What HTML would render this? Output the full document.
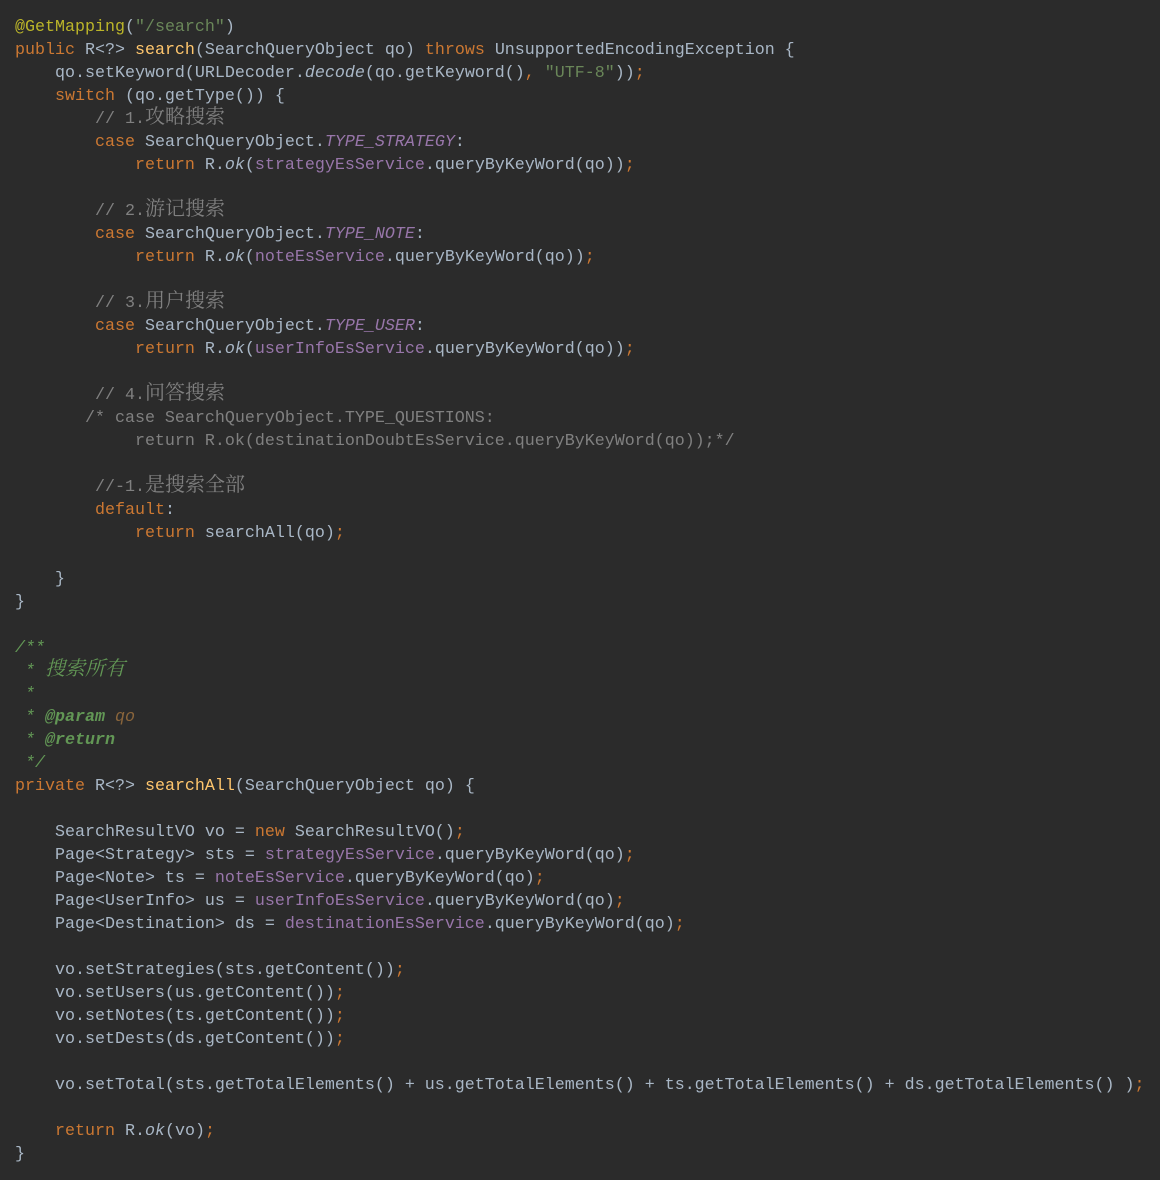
<!DOCTYPE html>
<html><head><meta charset="utf-8"><style>
html,body{margin:0;padding:0;background:#2b2b2b;width:1160px;height:1180px;overflow:hidden}
pre{margin:0;padding:16px 0 0 15px;font-family:"Liberation Mono",monospace;font-size:16.667px;line-height:23px;color:#a9b7c6;white-space:pre}
.k{color:#cc7832}.s{color:#6a8759}.f{color:#9876aa;font-style:italic}.fn{color:#9876aa}.c{color:#808080}.d{color:#629755;font-style:italic}.t{color:#629755;font-weight:bold;font-style:italic}.dq{color:#8a653b;font-style:italic}.a{color:#bbb529}.m{color:#ffc66d}.i{font-style:italic}
.z{font-family:"Noto Serif CJK SC",serif;font-size:20px;line-height:0}
</style></head><body><pre><span class="a">@GetMapping</span>(<span class="s">"/search"</span>)
<span class="k">public </span>R&lt;?&gt; <span class="m">search</span>(SearchQueryObject qo) <span class="k">throws </span>UnsupportedEncodingException {
    qo.setKeyword(URLDecoder.<span class="i">decode</span>(qo.getKeyword()<span class="k">, </span><span class="s">"UTF-8"</span>))<span class="k">;</span>
    <span class="k">switch </span>(qo.getType()) {
        <span class="c">// 1.<span class="z">攻略搜索</span></span>
        <span class="k">case </span>SearchQueryObject.<span class="f">TYPE_STRATEGY</span>:
            <span class="k">return </span>R.<span class="i">ok</span>(<span class="fn">strategyEsService</span>.queryByKeyWord(qo))<span class="k">;</span>

        <span class="c">// 2.<span class="z">游记搜索</span></span>
        <span class="k">case </span>SearchQueryObject.<span class="f">TYPE_NOTE</span>:
            <span class="k">return </span>R.<span class="i">ok</span>(<span class="fn">noteEsService</span>.queryByKeyWord(qo))<span class="k">;</span>

        <span class="c">// 3.<span class="z">用户搜索</span></span>
        <span class="k">case </span>SearchQueryObject.<span class="f">TYPE_USER</span>:
            <span class="k">return </span>R.<span class="i">ok</span>(<span class="fn">userInfoEsService</span>.queryByKeyWord(qo))<span class="k">;</span>

        <span class="c">// 4.<span class="z">问答搜索</span></span>
       <span class="c">/* case SearchQueryObject.TYPE_QUESTIONS:
            return R.ok(destinationDoubtEsService.queryByKeyWord(qo));*/</span>

        <span class="c">//-1.<span class="z">是搜索全部</span></span>
        <span class="k">default</span>:
            <span class="k">return </span>searchAll(qo)<span class="k">;</span>

    }
}

<span class="d">/**
 * <span class="z">搜索所有</span>
 *
 * </span><span class="t">@param </span><span class="dq">qo</span>
<span class="d"> * </span><span class="t">@return</span>
<span class="d"> */</span>
<span class="k">private </span>R&lt;?&gt; <span class="m">searchAll</span>(SearchQueryObject qo) {

    SearchResultVO vo = <span class="k">new </span>SearchResultVO()<span class="k">;</span>
    Page&lt;Strategy&gt; sts = <span class="fn">strategyEsService</span>.queryByKeyWord(qo)<span class="k">;</span>
    Page&lt;Note&gt; ts = <span class="fn">noteEsService</span>.queryByKeyWord(qo)<span class="k">;</span>
    Page&lt;UserInfo&gt; us = <span class="fn">userInfoEsService</span>.queryByKeyWord(qo)<span class="k">;</span>
    Page&lt;Destination&gt; ds = <span class="fn">destinationEsService</span>.queryByKeyWord(qo)<span class="k">;</span>

    vo.setStrategies(sts.getContent())<span class="k">;</span>
    vo.setUsers(us.getContent())<span class="k">;</span>
    vo.setNotes(ts.getContent())<span class="k">;</span>
    vo.setDests(ds.getContent())<span class="k">;</span>

    vo.setTotal(sts.getTotalElements() + us.getTotalElements() + ts.getTotalElements() + ds.getTotalElements() )<span class="k">;</span>

    <span class="k">return </span>R.<span class="i">ok</span>(vo)<span class="k">;</span>
}</pre></body></html>
